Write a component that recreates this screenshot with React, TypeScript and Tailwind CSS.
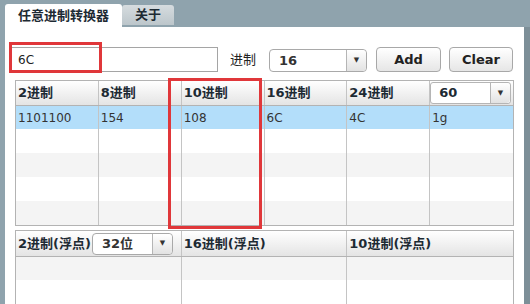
import React from "react"

const font = { fontFamily: '"DejaVu Sans", "Noto Sans CJK SC", sans-serif' }

function Arrow() {
  return (
    <div className="flex h-full w-[20px] items-center justify-center rounded-r-[4px] border-l border-[#b5b5b5] bg-gradient-to-b from-white to-[#e2e2e2]">
      <span className="text-[7px] leading-none text-[#333]">▼</span>
    </div>
  )
}

function Select({ value, className }: { value: string; className: string }) {
  return (
    <div className={`flex items-stretch border border-[#a9a9a9] bg-white ${className}`}>
      <div className="flex flex-1 items-center pl-[9px] text-[13px] font-bold text-[#333]">{value}</div>
      <Arrow />
    </div>
  )
}

const cols1 = ["2进制", "8进制", "10进制", "16进制", "24进制"]
const row1 = ["1101100", "154", "108", "6C", "4C", "1g"]
const rowBg = ["bg-white", "bg-[#f4f4f4]", "bg-white", "bg-[#f4f4f4]"]

export default function App() {
  return (
    <div className="relative h-[304px] w-[530px] overflow-hidden bg-[#8fa3ad]" style={font}>
      {/* tabs */}
      <div className="flex h-[27px] items-end pl-[5px]">
        <div className="flex h-[23px] w-[117px] items-center justify-center rounded-t-[3px] bg-white text-[13px] font-bold text-[#1d2a33]">
          任意进制转换器
        </div>
        <div className="mb-[2px] flex h-[20px] w-[52px] items-center justify-center rounded-t-[3px] bg-gradient-to-b from-[#d6dcdf] to-[#bcc6cb] text-[13px] font-bold text-[#1d2a33]">
          关于
        </div>
      </div>

      <div className="flex h-[277px]">
        <div className="ml-[5px] w-[519px] bg-white pl-[6px] pt-[20px]">
          {/* toolbar */}
          <div className="flex h-[25px] items-center">
            <div className="flex h-[25px] w-[207px] items-center border border-[#a5a5a5] pl-[6px] text-[12px] text-[#222]">6C</div>
            <div className="ml-[12px] text-[13px] text-[#222]">进制</div>
            <Select value="16" className="ml-[13px] mt-[2px] h-[23px] w-[98px] rounded-[4px]" />
            <button className="ml-[9px] h-[25px] w-[65px] rounded-[4px] border border-[#a8a8a8] bg-gradient-to-b from-white to-[#e6e6e6] text-[13px] font-bold text-[#222]">
              Add
            </button>
            <button className="ml-[8px] h-[25px] w-[64px] rounded-[4px] border border-[#a8a8a8] bg-gradient-to-b from-white to-[#e6e6e6] text-[13px] font-bold text-[#222]">
              Clear
            </button>
          </div>

          {/* table 1 */}
          <div className="ml-[4px] mt-[8px] w-[499px] border border-[#b3b3b3]">
            <div className="grid h-[24px] grid-cols-6 bg-gradient-to-b from-white to-[#e4e4e4] text-[13px] font-bold text-[#1d2a33]">
              {cols1.map((c) => (
                <div key={c} className="flex items-center border-r border-[#c4c4c4] pl-[2px]">{c}</div>
              ))}
              <div className="flex items-stretch py-[1px] pr-[2px]">
                <div className="flex flex-1 items-center rounded-[3px] border border-[#b5b5b5] bg-white">
                  <div className="flex-1 pl-[8px]">60</div>
                  <Arrow />
                </div>
              </div>
            </div>
            <div className="grid h-[24px] grid-cols-6 border-t border-[#b3b3b3] bg-[#b3defa] text-[12px] text-[#333]">
              {row1.map((v, i) => (
                <div key={i} className={`flex items-center pl-[2px] ${i < 5 ? "border-r border-[#c4c4c4]" : ""}`}>{v}</div>
              ))}
            </div>
            {rowBg.map((bg, r) => (
              <div key={r} className={`grid h-[24px] grid-cols-6 ${bg}`}>
                {row1.map((_, i) => (
                  <div key={i} className={i < 5 ? "border-r border-[#c4c4c4]" : ""} />
                ))}
              </div>
            ))}
          </div>

          {/* table 2 */}
          <div className="ml-[4px] mt-[4px] w-[499px] border border-[#b3b3b3]">
            <div className="grid h-[25px] grid-cols-3 bg-gradient-to-b from-white to-[#e4e4e4] text-[13px] font-bold text-[#1d2a33]">
              <div className="flex items-center border-r border-[#c4c4c4] pl-[2px]">
                2进制(浮点)
                <Select value="32位" className="ml-[1px] h-[22px] w-[81px] rounded-[4px]" />
              </div>
              <div className="flex items-center border-r border-[#c4c4c4] pl-[2px]">16进制(浮点)</div>
              <div className="flex items-center pl-[2px]">10进制(浮点)</div>
            </div>
            {["bg-[#f4f4f4]", "bg-white"].map((bg, r) => (
              <div key={r} className={`grid h-[24px] grid-cols-3 ${bg} ${r === 0 ? "border-t border-[#b3b3b3]" : ""}`}>
                <div className="border-r border-[#c4c4c4]" />
                <div className="border-r border-[#c4c4c4]" />
                <div />
              </div>
            ))}
          </div>
        </div>
        <div className="flex-1 bg-[#7d8f98]" />
      </div>

      {/* annotations */}
      <div className="absolute left-[9px] top-[42px] h-[31px] w-[93px] border-[3px] border-[#e0373a]" />
      <div className="absolute left-[168px] top-[78px] h-[151px] w-[94px] border-[3px] border-[#e0373a]" />
    </div>
  )
}
